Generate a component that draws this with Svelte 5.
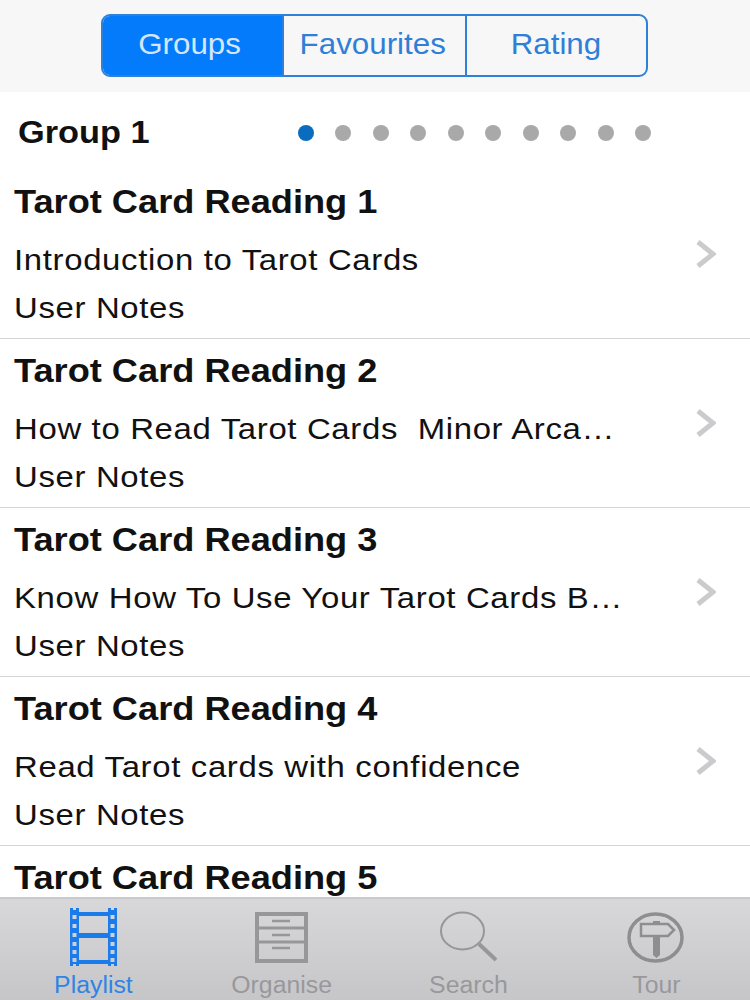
<script>
  const tabs = ["Groups", "Favourites", "Rating"];
  const dots = [0, 1, 2, 3, 4, 5, 6, 7, 8, 9];
  const rows = [
    { title: "Tarot Card Reading 1", sub: "Introduction to Tarot Cards" },
    { title: "Tarot Card Reading 2", sub: "How to Read Tarot Cards  Minor Arca…" },
    { title: "Tarot Card Reading 3", sub: "Know How To Use Your Tarot Cards B…" },
    { title: "Tarot Card Reading 4", sub: "Read Tarot cards with confidence" },
  ];
</script>

<div class="screen">
  <header class="top">
    <div class="segments">
      {#each tabs as tab, i}
        <div class="segment" class:active={i === 0}><span>{tab}</span></div>
      {/each}
    </div>
  </header>

  <main class="content">
    <div class="group-row">
      <span class="group-name">Group 1</span>
      <div class="dots">
        {#each dots as d}
          <span class="dot" class:current={d === 0}></span>
        {/each}
      </div>
    </div>

    {#each rows as row}
      <div class="row">
        <div class="row-title">{row.title}</div>
        <div class="row-sub">{row.sub}</div>
        <div class="row-notes">User Notes</div>
        <svg class="chevron" width="20" height="28" viewBox="0 0 20 28">
          <path d="M2 2 L17 14 L2 26" fill="none" stroke="#cbcbce" stroke-width="5" />
        </svg>
      </div>
    {/each}
    <div class="row last">
      <div class="row-title">Tarot Card Reading 5</div>
    </div>
  </main>

  <nav class="tabbar">
    <div class="tab on">
      <svg width="60" height="60" viewBox="0 0 60 60">
        <path fill="#1a7bea" fill-rule="evenodd" d="M6 1h9v58H6z M44 1h9v58h-9z
          M8.5 8h4v4h-4z M8.5 17h4v4h-4z M8.5 26h4v4h-4z M8.5 35h4v4h-4z M8.5 43h4v4h-4z M8.5 51h4v4h-4z
          M46.5 8h4v4h-4z M46.5 17h4v4h-4z M46.5 26h4v4h-4z M46.5 35h4v4h-4z M46.5 43h4v4h-4z M46.5 51h4v4h-4z
          M9 1h3v2H9z M47 1h3v2h-3z M9 57h3v2H9z M47 57h3v2h-3z
          M15 5h29v4H15z M15 26h29v5H15z M15 53h29v4H15z" />
      </svg>
      <span>Playlist</span>
    </div>
    <div class="tab">
      <svg width="60" height="60" viewBox="0 0 60 60">
        <g fill="none" stroke="#97979b">
          <rect x="6" y="7" width="49" height="47" stroke-width="4" />
          <path d="M7 21H54M7 35H54" stroke-width="3" />
          <path d="M21 14H39M21 28H39M21 41H39" stroke-width="2.5" />
        </g>
      </svg>
      <span>Organise</span>
    </div>
    <div class="tab">
      <svg width="60" height="60" viewBox="0 0 60 60">
        <g fill="none" stroke="#97979b">
          <ellipse cx="23.5" cy="24" rx="21.5" ry="18.5" stroke-width="2" />
          <path d="M40 37L57 53" stroke-width="4" />
        </g>
      </svg>
      <span>Search</span>
    </div>
    <div class="tab">
      <svg width="60" height="60" viewBox="0 0 60 60">
        <ellipse cx="29.5" cy="30.5" rx="26.5" ry="23.5" fill="none" stroke="#8e8e92" stroke-width="3.5" />
        <path d="M15 17H42L48 23L42 29H15Z" fill="none" stroke="#8e8e92" stroke-width="2.5" />
        <path d="M27 14H34V17H27ZM27 29H34V48L30.5 51L27 48Z" fill="#8e8e92" />
      </svg>
      <span>Tour</span>
    </div>
  </nav>
</div>

<style>
  :global(body) {
    margin: 0;
  }

  .screen {
    width: 750px;
    height: 1000px;
    display: flex;
    flex-direction: column;
    overflow: hidden;
    background: #fff;
    font-family: "Liberation Sans", Arial, sans-serif;
    color: #111;
  }

  .top {
    height: 92px;
    flex: none;
    background: #f7f7f8;
    display: flex;
    justify-content: center;
    padding-top: 14px;
    box-sizing: border-box;
  }

  .segments {
    width: 547px;
    height: 63px;
    margin-left: -2px;
    display: grid;
    grid-template-columns: 179px 183px 1fr;
    box-sizing: border-box;
    border: 2px solid #2f80d8;
    border-radius: 9px;
    overflow: hidden;
  }

  .segment {
    display: flex;
    align-items: center;
    justify-content: center;
    box-sizing: border-box;
    font-size: 29px;
    color: #2f7fd6;
    border-left: 2px solid #2f80d8;
    padding-bottom: 2px;
  }

  .segment span {
    display: inline-block;
    transform: scaleX(1.08);
  }

  .segment:first-child {
    border-left: 0;
    padding-right: 5px;
  }

  .segment:nth-child(2) {
    padding-right: 2px;
  }

  .segment.active {
    background: #037bfb;
    color: #d4e6fb;
  }

  .content {
    flex: 1;
    min-height: 0;
    overflow: hidden;
  }

  .group-row {
    height: 78px;
    display: flex;
    align-items: center;
    justify-content: space-between;
    padding: 3px 99px 0 18px;
    box-sizing: border-box;
  }

  .group-name {
    font-size: 32px;
    font-weight: bold;
    transform: scaleX(1.073);
    transform-origin: left center;
  }

  .dots {
    display: flex;
    gap: 21.5px;
  }

  .dot {
    width: 16px;
    height: 16px;
    border-radius: 50%;
    background: #a9a9a9;
  }

  .dot.current {
    background: #0a6cbf;
  }

  .row {
    position: relative;
    height: 169px;
    box-sizing: border-box;
    padding: 13px 0 0 14px;
    border-bottom: 1.5px solid #d4d4d6;
  }

  .row.last {
    border-bottom: 0;
  }

  .row-title {
    font-size: 33px;
    font-weight: bold;
    line-height: 38px;
    transform: scaleX(1.097);
    transform-origin: left center;
  }

  .row-sub,
  .row-notes {
    font-size: 30px;
    line-height: 34px;
    letter-spacing: 0.6px;
    transform: scaleX(1.097);
    transform-origin: left center;
    white-space: pre;
  }

  .row-sub {
    margin-top: 22px;
  }

  .row-notes {
    margin-top: 14px;
  }

  .chevron {
    position: absolute;
    right: 34px;
    top: 70px;
  }

  .tabbar {
    height: 103px;
    flex: none;
    display: grid;
    grid-template-columns: repeat(4, 1fr);
    box-sizing: border-box;
    border-top: 2px solid #c9c9cb;
    background: linear-gradient(#d8d8da, #c6c6c9);
  }

  .tab {
    display: flex;
    flex-direction: column;
    align-items: center;
    padding-top: 8px;
    color: #98989c;
    font-size: 23px;
  }

  .tab span {
    margin-top: auto;
    padding-bottom: 1px;
    transform: scaleX(1.08);
  }

  .tab.on {
    color: #2f84e4;
  }
</style>
